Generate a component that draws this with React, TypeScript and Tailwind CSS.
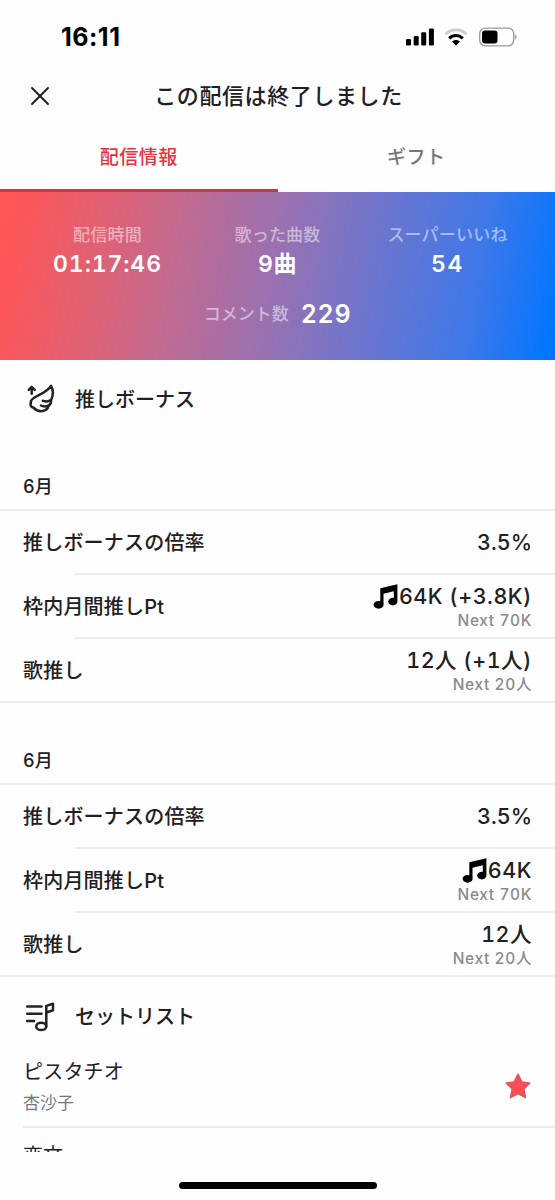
import type { ReactNode } from 'react';

const Beamed = () => (
  <svg className="h-[27px] w-[27px] shrink-0" viewBox="0 0 27 27" fill="#000">
    <path d="M8.3 5.3 25.4 1.2V18H21.8V8.2L11.5 10.7V21H8.3Z" />
    <ellipse cx="6.6" cy="21.8" rx="5" ry="3.9" />
    <ellipse cx="20.8" cy="18.6" rx="4.6" ry="3.8" />
  </svg>
);

const Wing = () => (
  <svg className="h-8 w-8 shrink-0" viewBox="0 0 32 32" fill="none" stroke="#222" strokeWidth="2.5" strokeLinecap="round" strokeLinejoin="round">
    <path d="M7.700 10.800V4.200M4.700 6.800 7.700 3.800l3 3" />
    <path d="M27 2.800C24 8 17.500 10.600 13 13C9 15 6.200 17.800 6.800 20.300C6 22.500 7.500 24.300 9.800 24.800C12.500 27.800 17 28.800 20.800 27.300C23.300 26.300 24.300 24.800 24.300 22.800C26.500 21.500 27.300 19.300 27 17.200C29.200 12.500 29.300 6.500 27 2.800Z" />
    <path d="M27 17.200C24.300 18.700 21.500 18.700 18.800 17.800M24.300 22.800C21.500 23.800 19 23.500 17 22.500" />
  </svg>
);

const Playlist = () => (
  <svg className="h-8 w-8 shrink-0" viewBox="0 0 32 32" fill="none" stroke="#222" strokeWidth="2.5" strokeLinecap="round" strokeLinejoin="round">
    <path d="M3.200 6.600H17.500M3.200 13.800H17.500M3.200 21H10" />
    <path d="M22.300 26.300V5.900L29 3.800V10.300L22.300 12.500" />
    <ellipse cx="17.200" cy="26.400" rx="5" ry="3.700" />
  </svg>
);

const Stat = ({ label, value, track }: { label: string; value: string; track: string }) => (
  <div className="flex w-[170px] flex-col items-center text-center">
    <div className="text-[17px] leading-[24px] font-medium tracking-[0.2px] whitespace-nowrap text-white/50">{label}</div>
    <div className={`mt-px text-[23px] leading-[32px] font-semibold text-white ${track}`}>{value}</div>
  </div>
);

const Row = ({ label, line, children }: { label: string; line: string; children: ReactNode }) => (
  <div className="flex h-16 flex-col">
    <div className="flex flex-1 items-center justify-between pr-[23px] pl-[23px]">
      <div className="pt-[2px] text-[20px] leading-[28px] font-medium tracking-[0.2px]">{label}</div>
      {children}
    </div>
    <div className={`h-[2px] bg-[#ececef] ${line}`} />
  </div>
);

const Amount = ({ note, value, next }: { note?: boolean; value: string; next: string }) => (
  <div className="flex flex-col items-end">
    <div className="flex h-[30px] items-center text-[21.500px] leading-[30px] font-medium tracking-[0.500px]">
      {note && <Beamed />}
      <span>{value}</span>
    </div>
    <div className="text-[15.500px] leading-[20px] font-medium tracking-[0.6px] text-[#8a8a8e]">{next}</div>
  </div>
);

const Month = ({ points, people }: { points: string; people: string }) => (
  <section>
    <div className="flex h-[47px] items-center border-b-2 border-[#ececef] pl-[23px] text-[18px] font-medium">6月</div>
    <Row label="推しボーナスの倍率" line="ml-[75px]">
      <div className="text-[21.500px] leading-[30px] font-medium">3.5%</div>
    </Row>
    <Row label="枠内月間推しPt" line="ml-[75px]">
      <Amount note value={points} next="Next 70K" />
    </Row>
    <Row label="歌推し" line="">
      <Amount value={people} next="Next 20人" />
    </Row>
  </section>
);

export default function App() {
  return (
    <div className="flex h-[1200px] w-[555px] flex-col overflow-hidden bg-[#fefdff] font-['Inter','Noto_Sans_CJK_JP',sans-serif] text-[#202022] tabular-nums">
      <div className="flex h-[74px] shrink-0 items-center justify-between pr-[37px] pl-[61px]">
        <div className="pt-[2px] text-[25px] font-bold tracking-[0.500px] text-black proportional-nums">16:11</div>
        <div className="flex items-center gap-[10px]">
          <svg className="h-[18px] w-[28px]" viewBox="0 0 28 18" fill="#000">
            <rect x="0" y="11" width="5" height="6.500" rx="1.200" />
            <rect x="7.700" y="8" width="5" height="9.500" rx="1.200" />
            <rect x="15.200" y="4.200" width="5" height="13.300" rx="1.200" />
            <rect x="22.900" y="0.500" width="5" height="17" rx="1.200" />
          </svg>
          <svg className="h-[18px] w-[24px]" viewBox="0 0 24 18" fill="none" strokeWidth="3">
            <path d="M1.500 6.200C7.500 .2 16.500 .2 22.500 6.200" stroke="#cfced2" />
            <path d="M5.200 10.300C9.200 6.500 14.800 6.500 18.800 10.300" stroke="#000" />
            <path d="M8 13.500C10.300 11.400 13.700 11.400 16 13.500L12 17.700Z" fill="#000" />
          </svg>
          <svg className="h-[20px] w-[40px]" viewBox="0 0 40 20">
            <rect x="1.700" y="1.200" width="34" height="17.600" rx="5.500" fill="none" stroke="#99989d" strokeWidth="1.300" />
            <rect x="4" y="3.600" width="15.500" height="12.800" rx="3" fill="#000" />
            <path d="M37.300 7.300Q39.700 10 37.300 12.700Z" fill="#77767b" />
          </svg>
        </div>
      </div>

      <header className="grid h-[44px] shrink-0 grid-cols-[80px_1fr_78px] items-center">
        <svg className="ml-[30px] h-[20px] w-[20px]" viewBox="0 0 20 20" stroke="#202022" strokeWidth="2.100" strokeLinecap="round">
          <path d="M2 2 18 18M18 2 2 18" />
        </svg>
        <h1 className="text-center text-[22px] leading-[30px] font-medium tracking-[0.6px] whitespace-nowrap">この配信は終了しました</h1>
      </header>

      <nav className="grid h-[74px] shrink-0 grid-cols-2 text-center text-[19px] font-medium tracking-[0.5px]">
        <div className="border-b-[3px] border-[#d93237] pt-[26px] leading-[28px] text-[#e5343d]">配信情報</div>
        <div className="pt-[26px] leading-[28px] text-[#77777b]">ギフト</div>
      </nav>

      <section className="flex h-[168px] shrink-0 flex-col bg-[linear-gradient(100deg,#ff5558_0%,#fc5659_4%,#df6174_19%,#bf6b92_33%,#9871b2_50%,#7075cc_65%,#3f78e8_84%,#0076ff_99%)] pt-[31px]">
        <div className="flex justify-center">
          <Stat label="配信時間" value="01:17:46" track="tracking-[0.900px]" />
          <Stat label="歌った曲数" value="9曲" track="tracking-[0.5px]" />
          <Stat label="スーパーいいね" value="54" track="tracking-[1.500px]" />
        </div>
        <div className="mt-[18px] flex items-center justify-center gap-[12px]">
          <span className="text-[17px] leading-[30px] font-medium text-white/50">コメント数</span>
          <span className="text-[25px] leading-[32px] font-semibold tracking-[0.600px] text-white">229</span>
        </div>
      </section>

      <div className="flex h-[78px] shrink-0 items-center pl-[24px]">
        <Wing />
        <h2 className="ml-[19px] pt-[2px] text-[20px] leading-[28px] font-medium">推しボーナス</h2>
      </div>

      <div className="flex shrink-0 flex-col gap-[35px] pt-[26px]">
        <Month points="64K (+3.8K)" people="12人 (+1人)" />
        <Month points="64K" people="12人" />
      </div>

      <div className="flex h-[78px] shrink-0 items-center pl-[24px]">
        <Playlist />
        <h2 className="ml-[19px] pt-[2px] text-[20px] leading-[28px] font-medium">セットリスト</h2>
      </div>

      <div className="h-[97px] shrink-0 overflow-hidden">
        <div className="ml-[23px] flex h-[73px] items-start justify-between border-b-2 border-[#ececef] pr-[23px]">
          <div>
            <div className="pt-[2px] text-[20px] leading-[30px] tracking-[0.2px]">ピスタチオ</div>
            <div className="mt-[2px] text-[17px] leading-[28px] text-[#77777b]">杏沙子</div>
          </div>
          <svg className="mt-[17px] h-[28px] w-[28px]" viewBox="0 0 28 28" fill="#ff4d55" stroke="#e0525a" strokeWidth="1.200" strokeLinejoin="round">
            <path d="M14 2 17.900 9.800 26 11 20 16.800 21.600 25.800 14 21.800 6.400 25.800 8 16.800 2 11 10.100 9.800Z" />
          </svg>
        </div>
        <div className="ml-[23px] pt-[13px] text-[20px] leading-[30px]">恋文</div>
      </div>

      <div className="mt-auto mb-[11px] ml-[179px] h-[7px] w-[198px] shrink-0 rounded-full bg-black" />
    </div>
  );
}
